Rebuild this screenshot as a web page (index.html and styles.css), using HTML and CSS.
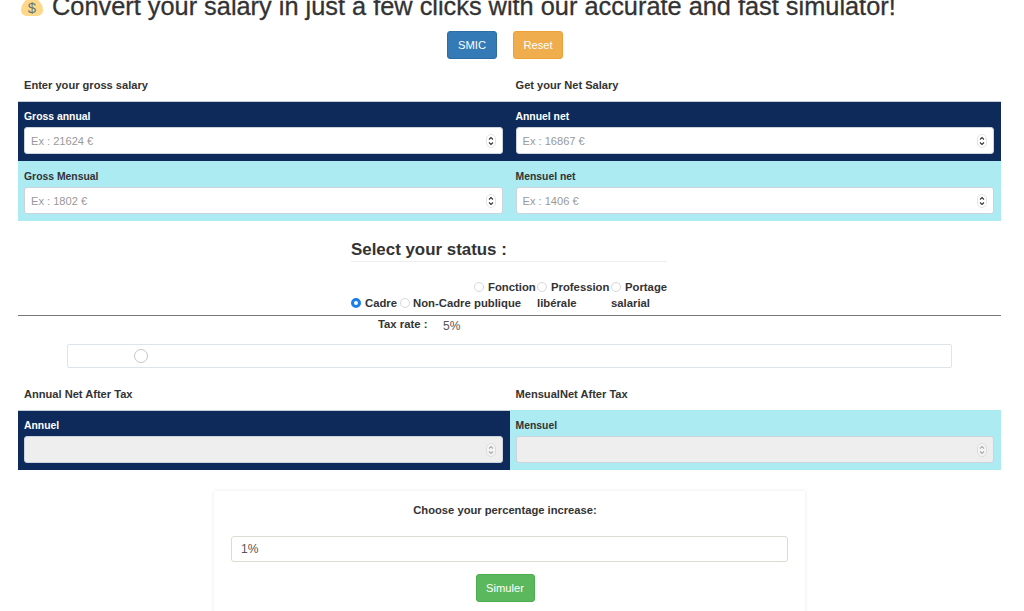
FILE: index.html
```html
<!DOCTYPE html>
<html lang="en">
<head>
  <meta charset="UTF-8" />
  <meta name="viewport" content="width=device-width, initial-scale=1.0"/>
  <title>Salary simulator</title>
  <link rel="stylesheet" href="styles.css">
</head>
<body>
  <div class="container">

    <h1 class="title">
      <svg class="bag" viewBox="0 0 22 20" width="22" height="20">
        <path d="M7 0 H15 L17 4 C20 7 22 10 22 14 C22 18 19 20 15 20 H7 C3 20 0 18 0 14 C0 10 2 7 5 4 Z" fill="#fdd888"/>
        <text x="11" y="17" text-anchor="middle" class="bag-sign">$</text>
      </svg>
      Convert your salary in just a few clicks with our accurate and fast simulator!
    </h1>

    <div class="actions">
      <button class="btn btn-blue">SMIC</button>
      <button class="btn btn-orange">Reset</button>
    </div>

    <div class="salary-grid">
      <div class="col-title">Enter your gross salary</div>
      <div class="col-title">Get your Net Salary</div>

      <div class="cell dark">
        <label>Gross annual</label>
        <div class="field">
          <input type="text" placeholder="Ex : 21624 €">
          <svg class="spin" viewBox="0 0 10 14" width="10" height="14"><rect x="0.5" y="0.5" width="9" height="13" rx="4.5" fill="#fff" stroke="#e4e4e4"/><path d="M3 5.5 5 3.5 7 5.5M3 8.5 5 10.5 7 8.5" fill="none" stroke="#333" stroke-width="1.1"/></svg>
        </div>
      </div>
      <div class="cell dark">
        <label>Annuel net</label>
        <div class="field">
          <input type="text" placeholder="Ex : 16867 €">
          <svg class="spin" viewBox="0 0 10 14" width="10" height="14"><rect x="0.5" y="0.5" width="9" height="13" rx="4.5" fill="#fff" stroke="#e4e4e4"/><path d="M3 5.5 5 3.5 7 5.5M3 8.5 5 10.5 7 8.5" fill="none" stroke="#333" stroke-width="1.1"/></svg>
        </div>
      </div>
      <div class="cell light">
        <label>Gross Mensual</label>
        <div class="field">
          <input type="text" placeholder="Ex : 1802 €">
          <svg class="spin" viewBox="0 0 10 14" width="10" height="14"><rect x="0.5" y="0.5" width="9" height="13" rx="4.5" fill="#fff" stroke="#e4e4e4"/><path d="M3 5.5 5 3.5 7 5.5M3 8.5 5 10.5 7 8.5" fill="none" stroke="#333" stroke-width="1.1"/></svg>
        </div>
      </div>
      <div class="cell light">
        <label>Mensuel net</label>
        <div class="field">
          <input type="text" placeholder="Ex : 1406 €">
          <svg class="spin" viewBox="0 0 10 14" width="10" height="14"><rect x="0.5" y="0.5" width="9" height="13" rx="4.5" fill="#fff" stroke="#e4e4e4"/><path d="M3 5.5 5 3.5 7 5.5M3 8.5 5 10.5 7 8.5" fill="none" stroke="#333" stroke-width="1.1"/></svg>
        </div>
      </div>
    </div>

    <section class="status">
      <h2>Select your status :</h2>
      <div class="status-options">
        <label class="opt opt-cadre"><input type="radio" name="status" checked>Cadre</label>
        <label class="opt opt-non"><input type="radio" name="status">Non-Cadre</label>
        <label class="opt opt-fonction"><input type="radio" name="status">Fonction<br>publique</label>
        <label class="opt opt-prof"><input type="radio" name="status">Profession<br>libérale</label>
        <label class="opt opt-portage"><input type="radio" name="status">Portage<br>salarial</label>
      </div>
    </section>

    <hr class="divider">

    <div class="tax-rate">
      <span class="tax-label">Tax rate :</span>
      <span class="tax-value">5%</span>
    </div>

    <input class="tax-slider" type="range" min="0" max="66" value="5">

    <div class="salary-grid after-tax">
      <div class="col-title">Annual Net After Tax</div>
      <div class="col-title">MensualNet After Tax</div>

      <div class="cell dark">
        <label>Annuel</label>
        <div class="field">
          <input type="text" disabled>
          <svg class="spin" viewBox="0 0 10 14" width="10" height="14"><rect x="0.5" y="0.5" width="9" height="13" rx="4.5" fill="#f4f4f4" stroke="#dcdcdc"/><path d="M3 5.5 5 3.5 7 5.5M3 8.5 5 10.5 7 8.5" fill="none" stroke="#aaa" stroke-width="1.1"/></svg>
        </div>
      </div>
      <div class="cell light">
        <label>Mensuel</label>
        <div class="field">
          <input type="text" disabled>
          <svg class="spin" viewBox="0 0 10 14" width="10" height="14"><rect x="0.5" y="0.5" width="9" height="13" rx="4.5" fill="#f4f4f4" stroke="#dcdcdc"/><path d="M3 5.5 5 3.5 7 5.5M3 8.5 5 10.5 7 8.5" fill="none" stroke="#aaa" stroke-width="1.1"/></svg>
        </div>
      </div>
    </div>

    <div class="increase-card">
      <p class="increase-title">Choose your percentage increase:</p>
      <input class="increase-input" type="text" value="1%">
      <button class="btn btn-green">Simuler</button>
    </div>

  </div>
</body>
</html>
```

FILE: styles.css
```css
:root {
  --navy: #0e2a5a;
  --cyan: #adebf3;
  --text: #333333;
}

* {
  box-sizing: border-box;
  font-family: "Liberation Sans", Arial, sans-serif;
}

html, body {
  height: 100%;
  overflow: hidden;
}

body {
  margin: 0;
  background: #fff;
  color: var(--text);
  font-size: 12px;
}

.container {
  padding: 0 23px 0 18px;
}

.title {
  display: flex;
  align-items: center;
  gap: 9px;
  height: 28px;
  margin: -8px 0 0;
  padding-left: 3px;
  font-size: 25.35px;
  font-weight: 400;
  white-space: nowrap;
  -webkit-text-stroke: 0.3px var(--text);
}

.bag-sign {
  font-size: 15px;
  fill: #67757f;
  stroke: none;
}

.actions {
  display: flex;
  justify-content: center;
  gap: 16px;
  margin: 11px 9px 0 0;
}

.btn {
  width: 50px;
  height: 28px;
  padding: 0;
  border: 1px solid transparent;
  border-radius: 3px;
  color: #fff;
  font-size: 11.2px;
}

.btn-blue { background: #337ab7; border-color: #2e6da4; }
.btn-orange { background: #f0ad4e; border-color: #eea236; }
.btn-green { background: #5cb85c; border-color: #4cae4c; width: 59px; margin-right: 9px; }

.salary-grid {
  display: grid;
  grid-template-columns: 491.5px 491.5px;
  margin-top: 17px;
}

.col-title {
  height: 25px;
  padding: 0 6px;
  font-weight: 700;
  font-size: 11.1px;
  line-height: 18px;
}

.cell {
  height: 60px;
  padding: 7px 7px 0 6px;
}

.cell label {
  display: block;
  height: 18px;
  font-weight: 700;
  font-size: 10.4px;
  line-height: 16px;
}

.dark { background: var(--navy); color: #fff; border-top: 1px solid #c5ccd6; }
.light { background: var(--cyan); padding-top: 8px; }

.field {
  position: relative;
}

.field input {
  display: block;
  width: 100%;
  height: 27px;
  padding: 0 6px;
  border: 1px solid #ccd3dd;
  border-radius: 3px;
  background: #fff;
  color: #555;
  font-size: 11.1px;
}

.field input::placeholder {
  color: #999;
}

.field input:disabled {
  background: #eeeeee;
}

.spin {
  position: absolute;
  top: 7px;
  right: 7px;
}

.status {
  width: 316px;
  margin: 19px 0 0 333px;
}

.status h2 {
  height: 22px;
  margin: 0;
  border-bottom: 1px solid #eeeeee;
  font-size: 16.9px;
  font-weight: 700;
  line-height: 20px;
}

.status-options {
  display: flex;
  align-items: flex-end;
  gap: 2px;
  margin-top: 17px;
  font-size: 11.3px;
  font-weight: 700;
  line-height: 16px;
  white-space: nowrap;
}

.opt-cadre { width: 47px; }
.opt-non { width: 72px; }
.opt-fonction { width: 61px; }
.opt-prof { width: 72px; }
.opt-portage { width: 56px; }

.opt input {
  appearance: none;
  display: inline-block;
  width: 10px;
  height: 10px;
  margin: 0 4px 0 0;
  border: 1px solid #d8d8d8;
  border-radius: 50%;
  background: #fff;
  vertical-align: -1px;
}

.opt-non input {
  margin-right: 3px;
}

.opt input:checked {
  border: 3px solid #1a7fe8;
}

.divider {
  height: 1px;
  margin: 4px 0 0;
  border: 0;
  background: #777;
}

.tax-rate {
  display: flex;
  height: 28px;
  padding: 1px 0 0 360px;
}

.tax-label {
  width: 65px;
  font-weight: 700;
  font-size: 11.3px;
  line-height: 14px;
}

.tax-value {
  padding-top: 1px;
  color: #555;
  font-size: 12px;
  line-height: 16px;
}

.tax-slider {
  appearance: none;
  display: block;
  width: 885px;
  height: 24px;
  margin: 0 0 0 49px;
  padding: 0;
  border: 1px solid #dde4ec;
  border-radius: 2px;
  background: #fff;
}

.tax-slider::-webkit-slider-thumb {
  appearance: none;
  width: 14px;
  height: 14px;
  border: 1px solid #c6c6c6;
  border-radius: 50%;
  background: #fff;
}

.after-tax {
  margin-top: 17px;
}

.increase-card {
  display: flex;
  flex-direction: column;
  align-items: center;
  width: 591px;
  height: 140px;
  margin: 21px 0 0 196px;
  padding: 11px 17px 0;
  box-shadow: 0 0 4px rgba(0, 0, 0, 0.09);
}

.increase-title {
  margin: 0 9px 18px 0;
  font-weight: 700;
  font-size: 11.2px;
  line-height: 16px;
}

.increase-input {
  width: 100%;
  height: 26px;
  margin-bottom: 12px;
  padding: 0 9px;
  border: 1px solid #dedccf;
  border-radius: 3px;
  color: #555;
  font-size: 12px;
}
```
